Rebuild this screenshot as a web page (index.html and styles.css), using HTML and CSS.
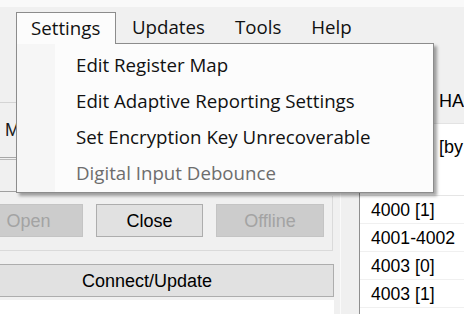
FILE: index.html
```html
<!DOCTYPE html>
<html>
<head>
<meta charset="utf-8">
<link rel="stylesheet" href="styles.css">
</head>
<body>
<div class="app">
  <div class="menubar">
    <div class="mb-item open">Settings</div>
    <div class="mb-item">Updates</div>
    <div class="mb-item">Tools</div>
    <div class="mb-item">Help</div>
  </div>
  <div class="main">
    <div class="left">
      <div class="spacer"></div>
      <div class="mbox">M</div>
      <div class="tbox"></div>
      <div class="group">
        <div class="btn disabled open-btn">Open</div>
        <div class="btn close-btn">Close</div>
        <div class="btn disabled offline-btn">Offline</div>
      </div>
      <div class="btn connect">Connect/Update</div>
      <div class="white-rest"></div>
    </div>
    <div class="splitter"></div>
    <div class="list">
      <div class="head1"><div class="c1"></div><div class="c2">HA</div></div>
      <div class="head2"><div class="c1"></div><div class="c2">[by</div></div>
      <div class="row">4000 [1]</div>
      <div class="row">4001-4002</div>
      <div class="row">4003 [0]</div>
      <div class="row">4003 [1]</div>
    </div>
  </div>
  <div class="dropdown">
    <div class="dd-item">Edit Register Map</div>
    <div class="dd-item">Edit Adaptive Reporting Settings</div>
    <div class="dd-item">Set Encryption Key Unrecoverable</div>
    <div class="dd-item disabled">Digital Input Debounce</div>
  </div>
</div>
</body>
</html>
```

FILE: styles.css
```css
html, body {
  margin: 0;
  padding: 0;
}
body {
  width: 464px;
  height: 314px;
  overflow: hidden;
  background: #f0f0f0;
}
.app {
  position: relative;
  width: 464px;
  height: 314px;
  overflow: hidden;
  background: #f0f0f0;
  font-family: "Open Sans", "Noto Sans", sans-serif;
  color: #000;
}
.menubar {
  height: 43px;
  box-sizing: border-box;
  border-top: 7px solid #f9f9f9;
  padding-top: 5px;
  padding-left: 15px;
  display: flex;
  font-size: 18.7px;
  color: #111;
}
.mb-item {
  height: 31px;
  line-height: 30px;
  padding: 0 15px;
  white-space: nowrap;
}
.mb-item.open {
  position: relative;
  z-index: 3;
  height: 32px;
  border: 1px solid #8c8c8c;
  border-bottom: none;
  background: #fcfcfc;
  box-sizing: border-box;
  line-height: 29px;
  padding: 0 0 0 14px;
  margin-left: 1px;
  margin-right: 1px;
  width: 100px;
}
.main {
  display: flex;
  height: 271px;
}
.left {
  width: 374px;
  margin-left: -40px;
  display: flex;
  flex-direction: column;
  font-family: "Liberation Sans", Arial, sans-serif;
  font-size: 18px;
}
.spacer {
  height: 59px;
  border-bottom: 1px solid #d4d4d4;
}
.mbox {
  height: 54px;
  line-height: 54px;
  padding-left: 45px;
  border-bottom: 1px solid #a7a7a7;
  color: #1a1a1a;
  font-size: 18px;
}
.tbox {
  margin-top: 1px;
  height: 31px;
  border-top: 1px solid #b9b9b9;
  border-bottom: 1px solid #a0a0a0;
  width: 367px;
}
.group {
  margin-top: 4px;
  width: 373px;
  box-sizing: border-box;
  padding: 8px 0 13px 14px;
  border-right: 1px solid #dadada;
  border-bottom: 1px solid #dadada;
  display: flex;
  gap: 13px;
}
.btn {
  height: 33px;
  box-sizing: border-box;
  border: 1px solid #adadad;
  background: #e1e1e1;
  display: flex;
  align-items: center;
  justify-content: center;
  color: #000;
  padding-top: 1px;
}
.btn.disabled {
  background: #cccccc;
  border-color: #c4c4c4;
  color: #a3a3a3;
}
.open-btn {
  width: 109px;
}
.close-btn {
  width: 107px;
}
.offline-btn {
  width: 108px;
}
.connect {
  margin-top: 13px;
  width: 374px;
  flex: none;
}
.white-rest {
  margin-top: 3px;
  flex: 1;
  background: #ffffff;
}
.splitter {
  width: 20px;
  box-sizing: border-box;
  border-left: 1px solid #fafafa;
  margin-left: 6px;
  border-right: 1px solid #8f8f8f;
}
.list {
  flex: 1;
  display: flex;
  flex-direction: column;
  overflow: hidden;
  font-family: "Liberation Sans", Arial, sans-serif;
  font-size: 17.6px;
  background: #ffffff;
}
.head1, .head2 {
  display: flex;
  white-space: nowrap;
}
.head1 {
  height: 81px;
  box-sizing: border-box;
  background: #f0f0f0;
  border-bottom: 1px solid #e3e3e3;
  align-items: flex-end;
  padding-bottom: 11px;
  font-size: 18px;
}
.head2 {
  height: 72px;
  box-sizing: border-box;
  border-bottom: 1px solid #e5e5e5;
  padding-top: 13px;
  font-size: 18px;
}
.c1 {
  width: 79px;
  flex: none;
}
.c2 {
  flex: none;
}
.row {
  height: 28px;
  line-height: 29px;
  box-sizing: border-box;
  padding-left: 11px;
  border-bottom: 1px solid #f0f0f0;
  white-space: nowrap;
}
.dropdown {
  position: absolute;
  z-index: 2;
  left: 16px;
  top: 43px;
  width: 418px;
  height: 150px;
  box-sizing: border-box;
  border: 1px solid #8c8c8c;
  background: linear-gradient(to right, #f6f6f6 0, #f6f6f6 38px, #fcfcfc 38px);
  box-shadow: 3px 3px 3px rgba(0, 0, 0, 0.35);
  padding-top: 3px;
  font-size: 18.7px;
}
.dd-item {
  height: 36px;
  line-height: 36px;
  padding-left: 59px;
  white-space: nowrap;
  color: #111;
}
.dd-item.disabled {
  color: #6d6d6d;
}
```
